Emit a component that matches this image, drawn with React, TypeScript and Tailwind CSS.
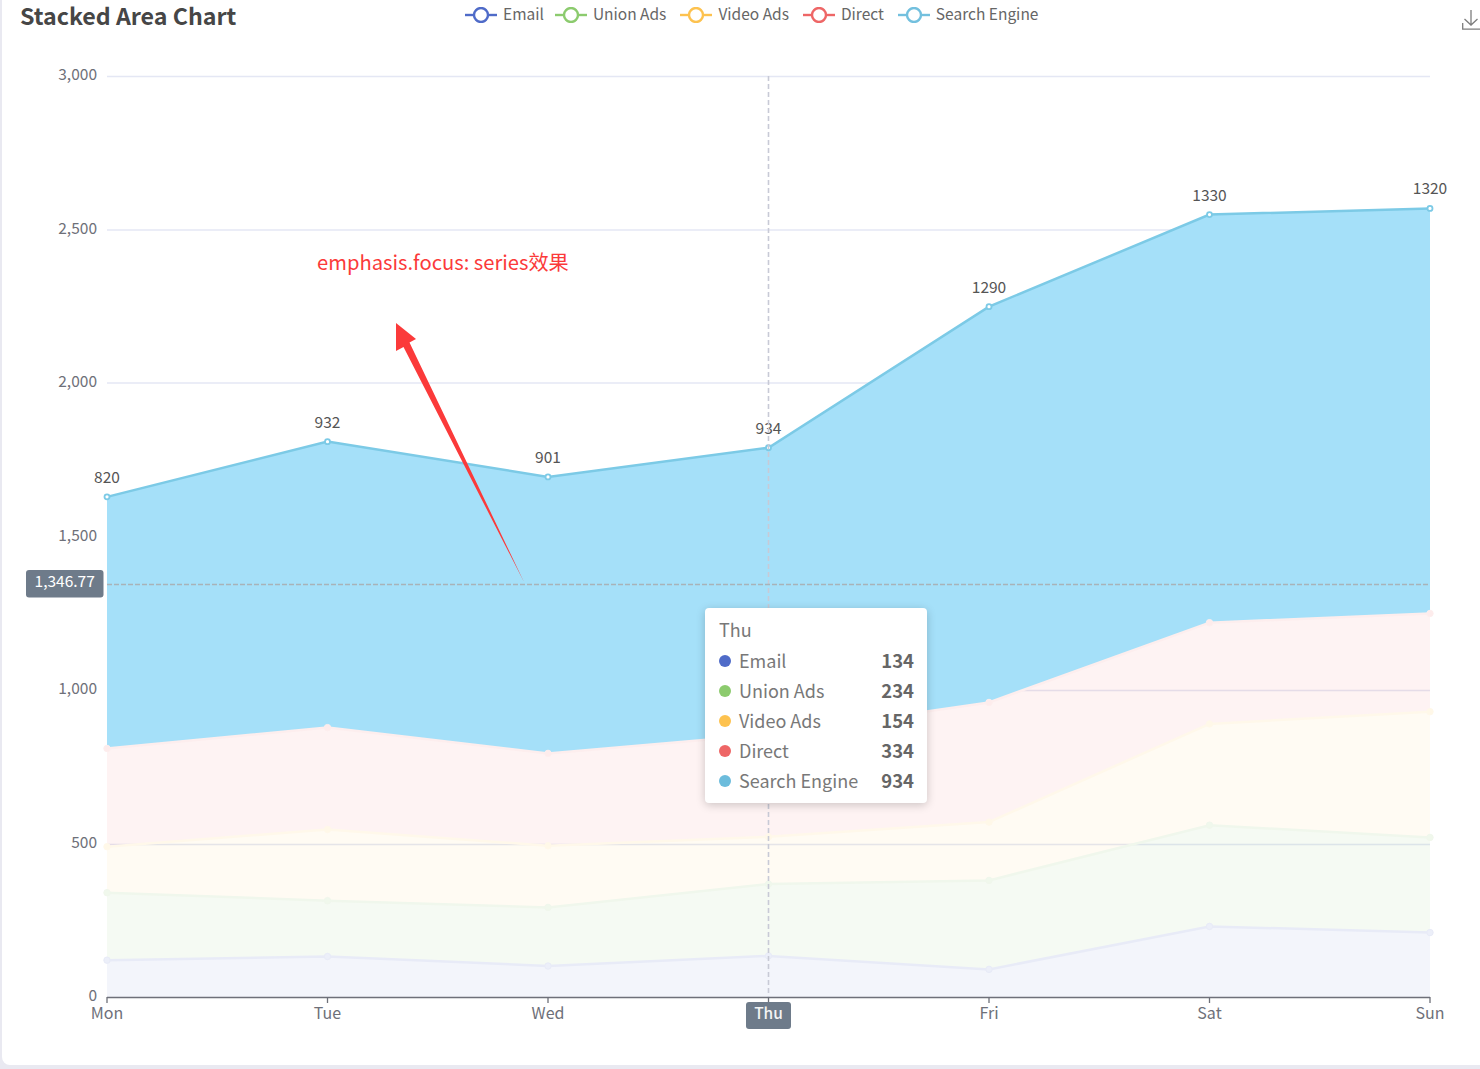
import React from "react";

const font = "font-['Noto_Sans_CJK_SC','Noto_Sans',sans-serif]";

const days = ["Mon", "Tue", "Wed", "Thu", "Fri", "Sat", "Sun"];
const xs = [107, 327.5, 548, 768.5, 989, 1209.5, 1430];
const baseY = 997;
const scale = 920.5 / 3000;

const series = [
  { name: "Email", color: "#4f6bc8", fill: "#5470c6", opacity: 0.07, line: "#e8ebf7", dot: "#eceff9", data: [120, 132, 101, 134, 90, 230, 210] },
  { name: "Union Ads", color: "#8ccb6e", fill: "#91cc75", opacity: 0.09, line: "#f0f7ec", dot: "#f0f8ec", data: [220, 182, 191, 234, 290, 330, 310] },
  { name: "Video Ads", color: "#fdc24f", fill: "#fac858", opacity: 0.07, line: "#fff8ea", dot: "#fff8e8", data: [150, 232, 201, 154, 190, 330, 410] },
  { name: "Direct", color: "#ee6666", fill: "#ee6666", opacity: 0.08, line: "#fdeeee", dot: "#fdecec", data: [320, 332, 301, 334, 390, 330, 320] },
  { name: "Search Engine", color: "#73c0de", fill: "#a3dff9", opacity: 0.98, line: "#7ccae6", dot: "#ffffff", data: [820, 932, 901, 934, 1290, 1330, 1320] },
];

const tooltipRows = [
  { name: "Email", value: 134, dot: "bg-[#4f6bc8]" },
  { name: "Union Ads", value: 234, dot: "bg-[#8ccb6e]" },
  { name: "Video Ads", value: 154, dot: "bg-[#fdc24f]" },
  { name: "Direct", value: 334, dot: "bg-[#ee6666]" },
  { name: "Search Engine", value: 934, dot: "bg-[#6cbcdc]" },
];

const gridTicks = [
  { label: "3,000", y: 76.5 },
  { label: "2,500", y: 230 },
  { label: "2,000", y: 383 },
  { label: "1,500", y: 537 },
  { label: "1,000", y: 690.5 },
  { label: "500", y: 844.5 },
  { label: "0", y: 997 },
];

function stacked() {
  const totals = xs.map(() => 0);
  return series.map((s) => {
    const bottom = totals.map((t) => baseY - t * scale);
    s.data.forEach((v, i) => (totals[i] += v));
    const top = totals.map((t) => baseY - t * scale);
    return { ...s, top, bottom };
  });
}

const LegendIcon = ({ color }: { color: string }) => (
  <svg className="mt-[2px]" width="32" height="16" viewBox="0 0 32 16" fill="none">
    <line x1="0" y1="8" x2="32" y2="8" stroke={color} strokeWidth="2.4" />
    <circle cx="16" cy="8" r="7" fill="#fff" stroke={color} strokeWidth="2.4" />
  </svg>
);

const Chart = () => {
  const bands = stacked();
  return (
    <svg width="1478" height="1029" viewBox="2 36 1478 1029" className="block" fontFamily="'Noto Sans CJK SC','Noto Sans',sans-serif">
      {gridTicks.slice(0, 6).map((t) => (
        <line key={t.label} x1="107" x2="1430" y1={t.y} y2={t.y} stroke="#e4e7f4" strokeWidth="1.4" />
      ))}
      {bands.map((b) => {
        const top = xs.map((x, i) => `${x},${b.top[i]}`).join(" ");
        const bottom = xs.map((x, i) => `${x},${b.bottom[i]}`).reverse().join(" ");
        return <polygon key={b.name} points={`${top} ${bottom}`} fill={b.fill} fillOpacity={b.opacity} />;
      })}
      {bands.map((b) => (
        <g key={b.name}>
          <polyline points={xs.map((x, i) => `${x},${b.top[i]}`).join(" ")} fill="none" stroke={b.line} strokeWidth="2.5" />
          {xs.map((x, i) => (
            <circle key={x} cx={x} cy={b.top[i]} r={b.name === "Search Engine" ? 2.5 : 3.2} fill={b.dot} stroke={b.line} strokeWidth={b.name === "Search Engine" ? 1.8 : 1} />
          ))}
        </g>
      ))}
      {bands[4].data.map((v, i) => (
        <text key={i} x={xs[i]} y={bands[4].top[i] - 14} textAnchor="middle" fontSize="15.5" fill="#555">
          {v}
        </text>
      ))}
      {gridTicks.map((t) => (
        <text key={t.label} x="97" y={t.y + 3.5} textAnchor="end" fontSize="15.5" fill="#6e7079">
          {t.label}
        </text>
      ))}
      <line x1="107" x2="1430" y1="997.5" y2="997.5" stroke="#6e7079" strokeWidth="1.3" />
      {xs.map((x, i) => (
        <g key={x}>
          <line x1={x} x2={x} y1="997" y2="1003" stroke="#6e7079" strokeWidth="1.3" />
          {i !== 3 && (
            <text x={x} y="1019" textAnchor="middle" fontSize="16" fill="#6e7079">
              {days[i]}
            </text>
          )}
        </g>
      ))}
      <line x1="768.5" x2="768.5" y1="76" y2="997" stroke="#c8cad6" strokeWidth="1.6" strokeDasharray="5 3" />
      <line x1="107" x2="1430" y1="584.5" y2="584.5" stroke="#a9b2b8" strokeWidth="1.6" strokeDasharray="5 2" />
      <rect x="26" y="570" width="77.5" height="27.5" rx="3" fill="#6e7b8a" />
      <text x="64.7" y="587" textAnchor="middle" fontSize="15.5" fill="#fff">
        1,346.77
      </text>
      <rect x="746" y="1002" width="45" height="27" rx="3" fill="#6e7b8a" />
      <text x="768.5" y="1019" textAnchor="middle" fontSize="15.5" fontWeight="500" fill="#f4f4f4">
        Thu
      </text>
      <polygon points="396,323 416,339 409.5,342.5 524,582 403.5,347 396,351" fill="#fb3a3a" />
    </svg>
  );
};

export default function App() {
  return (
    <div className={`h-[1069px] w-[1480px] overflow-hidden bg-[#e9e9f1] pb-1 pl-[2px] ${font}`}>
      <div className="relative h-full overflow-hidden rounded-bl-lg bg-white">
        <div className="flex h-9 items-start">
          <h1 className="w-[463px] shrink-0 pl-[18px] text-[23.2px] font-bold leading-[30px] text-[#464646]">Stacked Area Chart</h1>
          <div className="flex gap-[14px] pt-[2px]">
            {series.map((s) => (
              <div key={s.name} className="flex h-6 items-center gap-[6px] text-[15.5px] leading-[22px] text-[#666] first:mr-[-3px]">
                <LegendIcon color={s.color} />
                <span className="mb-[2px]">{s.name}</span>
              </div>
            ))}
          </div>
          <svg className="ml-auto mt-[10px] shrink-0" width="18" height="20" viewBox="0 0 18 20" fill="none" stroke="#7d7d7d" strokeWidth="1.3">
            <path d="M9 0V15M2.5 9L9 15L15.5 9M0.7 13V19.2H18" />
          </svg>
        </div>
        <Chart />
        <p className="absolute left-[315px] top-[248px] text-[20.2px] leading-[28px] text-[#fb3a3a]">emphasis.focus: series效果</p>
        <div className="absolute left-[703px] top-[608px] h-[195px] w-[222px] rounded bg-white pl-[14px] pr-[13px] pt-[6px] text-[18px] leading-[30px] text-[#787878] shadow-[0_2px_10px_rgba(0,0,0,0.2)]">
          <div className="h-[31px]">Thu</div>
          {tooltipRows.map((r) => (
            <div key={r.name} className="flex h-[30px] items-center">
              <span className={`mr-2 mt-[2px] h-3 w-3 rounded-full ${r.dot}`} />
              <span>{r.name}</span>
              <span className="ml-auto text-[18.5px] font-bold text-[#666]">{r.value}</span>
            </div>
          ))}
        </div>
      </div>
    </div>
  );
}
